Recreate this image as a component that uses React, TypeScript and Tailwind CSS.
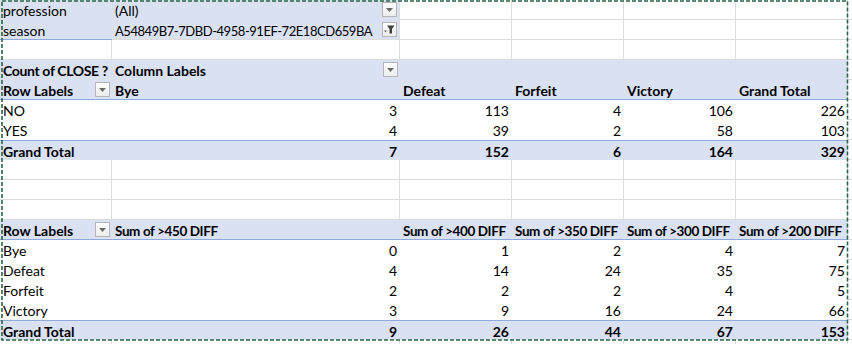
// Excel pivot tables: Count of CLOSE ? / Sum of DIFF

const W = ['w-[112px]', 'w-[288px]', 'w-[112px]', 'w-[112px]', 'w-[112px]', 'w-[112px]']

type Cell = { t?: string; b?: boolean; right?: boolean; dd?: 'arrow' | 'filter'; fit?: string }
type Kind = 'grid' | 'filter' | 'head' | 'body' | 'total'

function DropButton({ filter }: { filter?: boolean }) {
  return (
    <div className="absolute right-[2px] top-[2px] w-[15px] h-[15px] border border-[#b5b5b5] bg-gradient-to-b from-white to-[#ececec] flex items-center justify-center">
      {filter ? (
        <svg width="11" height="9" viewBox="0 0 11 9">
          <path d="M3 0.5h7.5L8 4v4.5H5.5V4z" fill="#404040" />
          <path d="M0 5.5h3L1.5 7.5z" fill="#606060" />
        </svg>
      ) : (
        <svg width="7" height="4" viewBox="0 0 7 4">
          <path d="M0 0h7L3.5 4z" fill="#6b6b6b" />
        </svg>
      )}
    </div>
  )
}

function Row({ kind, cells = [], line = false }: { kind: Kind; cells?: Cell[]; line?: boolean }) {
  return (
    <div className="flex h-5">
      {W.map((w, i) => {
        const c = cells[i] || {}
        const filled =
          kind === 'head' || kind === 'total' || (kind === 'filter' && i < 2)
        const grid = kind === 'grid' || (kind === 'filter' && i >= 2)
        const under = line && (kind !== 'filter' || i < 2)
        return (
          <div
            key={i}
            className={[
              w,
              'relative shrink-0 px-[3px] pt-[1px] whitespace-nowrap overflow-hidden leading-[20px]',
              filled ? 'bg-[#d9e1f2]' : 'bg-white',
              grid ? 'border-r border-b border-[#dadcdd]' : '',
              kind === 'filter' && i === 1 ? 'border-r border-[#dadcdd]' : '',
              under ? 'border-b border-[#8ea9db]' : '',
              kind === 'total' ? 'border-t border-[#8ea9db] leading-[19px] pt-0' : '',
              c.b || kind === 'total' ? 'font-bold' : '',
              c.right ? 'text-right' : 'text-left',
            ].join(' ')}
          >
            <span className={c.fit}>{c.t}</span>
            {c.dd && <DropButton filter={c.dd === 'filter'} />}
          </div>
        )
      })}
      <div className="w-[4px] shrink-0 border-b border-[#dadcdd]" />
    </div>
  )
}

const n = (t: string | number): Cell => ({ t: String(t), right: true })
const sumHead = (t: string): Cell => ({ t, b: true, fit: 'text-[13.5px] tracking-[-0.4px]' })

export default function App() {
  const outcomes = [
    ['NO', 3, 113, 4, 106, 226],
    ['YES', 4, 39, 2, 58, 103],
  ]
  const diffs = [
    ['Bye', 0, 1, 2, 4, 7],
    ['Defeat', 4, 14, 24, 35, 75],
    ['Forfeit', 2, 2, 2, 4, 5],
    ['Victory', 3, 9, 16, 24, 66],
  ]

  return (
    <div
      className="relative w-[852px] h-[344px] overflow-hidden bg-white text-black text-[14px]"
      style={{ fontFamily: 'Lato, "Open Sans", sans-serif' }}
    >
      {/* Filtros */}
      <Row kind="filter" cells={[{ t: 'profession' }, { t: '(All)', dd: 'arrow' }]} />
      <Row
        kind="filter"
        line
        cells={[
          { t: 'season' },
          { t: 'A54849B7-7DBD-4958-91EF-72E18CD659BA', dd: 'filter', fit: 'text-[13px] tracking-[-0.45px]' },
        ]}
      />
      <Row kind="grid" />

      {/* Pivot 1 */}
      <Row
        kind="head"
        cells={[
          { t: 'Count of CLOSE ?', b: true, fit: 'tracking-[-0.35px]' },
          { t: 'Column Labels', b: true, dd: 'arrow' },
        ]}
      />
      <Row
        kind="head"
        line
        cells={[
          { t: 'Row Labels', b: true, dd: 'arrow' },
          { t: 'Bye', b: true },
          { t: 'Defeat', b: true },
          { t: 'Forfeit', b: true },
          { t: 'Victory', b: true },
          { t: 'Grand Total', b: true },
        ]}
      />
      {outcomes.map((r) => (
        <Row key={r[0]} kind="body" cells={[{ t: String(r[0]) }, ...r.slice(1).map(n)]} />
      ))}
      <Row kind="total" cells={[{ t: 'Grand Total' }, n(7), n(152), n(6), n(164), n(329)]} />

      <Row kind="grid" />
      <Row kind="grid" />
      <Row kind="grid" />

      {/* Pivot 2 */}
      <Row
        kind="head"
        line
        cells={[
          { t: 'Row Labels', b: true, dd: 'arrow' },
          sumHead('Sum of >450 DIFF'),
          sumHead('Sum of >400 DIFF'),
          sumHead('Sum of >350 DIFF'),
          sumHead('Sum of >300 DIFF'),
          sumHead('Sum of >200 DIFF'),
        ]}
      />
      {diffs.map((r) => (
        <Row key={r[0]} kind="body" cells={[{ t: String(r[0]) }, ...r.slice(1).map(n)]} />
      ))}
      <Row kind="total" cells={[{ t: 'Grand Total' }, n(9), n(26), n(44), n(67), n(153)]} />
      <Row kind="grid" />

      {/* Marco de copia */}
      <svg className="absolute left-0 top-0 pointer-events-none" width="852" height="344">
        <rect
          x="2"
          y="1"
          width="845.5"
          height="339"
          fill="none"
          stroke="#2a6544"
          strokeWidth="1.6"
          strokeDasharray="4 2"
        />
      </svg>
    </div>
  )
}
